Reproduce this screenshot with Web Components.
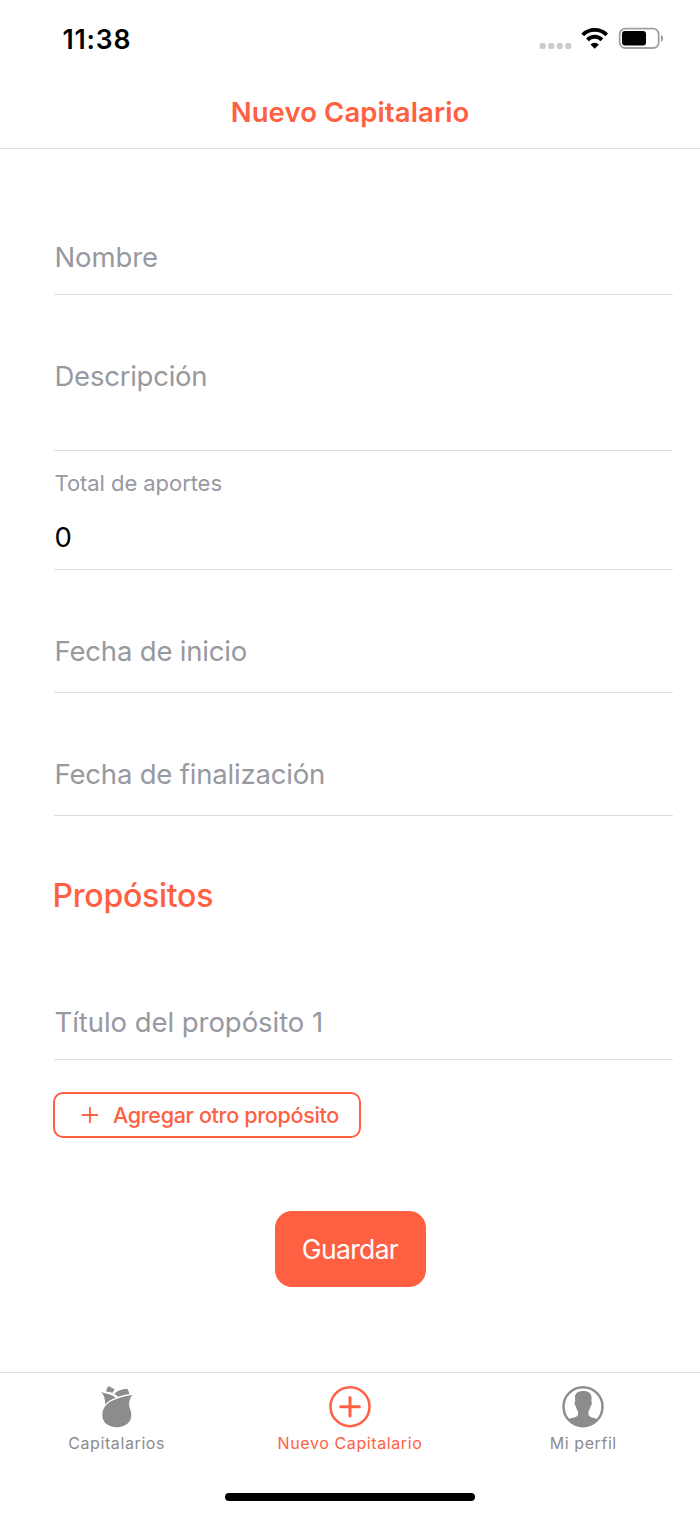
<!DOCTYPE html>
<html lang="es">
<head>
<meta charset="utf-8">
<title>Nuevo Capitalario</title>
<style>
    body {
        margin: 0;
        background: #fff;
        font-family: Inter, "Liberation Sans", sans-serif;
        --accent: #ff6042;
        --muted: #9799a1;
        --line: #dedede;
    }
</style>
</head>
<body>
<app-screen>
    <status-bar slot="top" time="11:38"></status-bar>
    <nav-header slot="top">Nuevo Capitalario</nav-header>

    <form-field style="--height: 146px; --bottom: 20px; --spacing: -0.1px">Nombre</form-field>
    <form-field style="--height: 156px; --bottom: 57px; --spacing: -0.24px">Descripción</form-field>
    <form-field style="--height: 119px; --bottom: 15px; --spacing: -0.06px" value="0">Total de aportes</form-field>
    <form-field style="--height: 123px; --bottom: 24px; --spacing: -0.18px">Fecha de inicio</form-field>
    <form-field style="--height: 123px; --bottom: 24px; --spacing: -0.19px">Fecha de finalización</form-field>
    <section-title>Propósitos</section-title>
    <form-field style="--height: 142px; --bottom: 20px; --spacing: -0.05px">Título del propósito 1</form-field>
    <add-button>Agregar otro propósito</add-button>
    <save-button>Guardar</save-button>

    <tab-bar slot="bottom">
        <tab-item icon="rose" style="--spacing: 0.6px">Capitalarios</tab-item>
        <tab-item icon="plus" active style="--spacing: 0.6px">Nuevo Capitalario</tab-item>
        <tab-item icon="person" style="--spacing: 0.56px">Mi perfil</tab-item>
    </tab-bar>
</app-screen>

<script>
const ICONS = {
    rose: `
        <svg width="42" height="42" viewBox="0 0 42 42" fill="currentColor">
            <path d="M36.2 9C33.600 12.500 32.700 16.500 33.300 20.500C33.900 23.500 35.300 25.500 35.300 29.300C35.300 36.500 29 41.200 20.800 41.200C12.400 41.200 6.300 36.500 6.300 29C6.300 21.500 11.500 16.200 19 13.500C24.500 11.400 30 10.100 36.200 9Z"/>
            <path d="M5 5.400C8.500 8 13 7.300 16.500 9.600C17.700 10.400 18.800 11.200 19.700 12.100C15.500 13.400 12 15.400 9.100 18.500C9.300 13.500 8.300 9.200 5 5.400Z"/>
            <path d="M12.600 0L18.900 3.500C17.700 4.600 17 5.600 16.500 6.800C14.400 6.100 12.300 5.900 10 5.500C10.500 3.400 11.300 1.500 12.600 0Z"/>
            <path d="M18.100 7.700C21.400 4.900 25.500 3.200 31.200 2.800C32.200 4.300 33 5.900 33.300 7.900C29.500 8.400 25.700 9.300 22 10.700C20.900 9.500 19.600 8.500 18.100 7.700Z"/>
        </svg>`,
    plus: `
        <svg width="42" height="42" viewBox="0 0 42 42" fill="none" stroke="currentColor">
            <circle cx="21" cy="20.700" r="19.500" stroke-width="2.500"/>
            <path d="M21 11.400V30M11.700 20.700H30.300" stroke-width="3" stroke-linecap="round"/>
        </svg>`,
    person: `
        <svg width="42" height="42" viewBox="0 0 42 42">
            <circle cx="21" cy="20.700" r="19.500" fill="none" stroke="currentColor" stroke-width="2.400"/>
            <path fill="currentColor" d="M13 11C13 7 16.500 5 21.300 5C26.500 5 29.700 7.500 29.600 12C29.600 13.500 29.400 14.700 29.300 15.600C30.300 16 29.900 19.500 28.600 20.100C28.200 22.500 27.300 24 26.500 25.300V29C27.500 31.500 32 31.500 36.500 33.600C32.500 38.500 27 40.800 21 40.800C15 40.800 9.500 38.500 5.500 33.600C10 31.500 15 31.500 16 29V25.300C15.100 24 14.200 22.500 13.800 20.100C12.500 19.500 12.200 16 13.200 15.600C13.100 14.300 13 12.500 13 11Z"/>
        </svg>`
};

class BaseElement extends HTMLElement {
    constructor() {
        super();
        this.attachShadow({ mode: 'open' });
    }

    connectedCallback() {
        const template = document.createElement('template');
        template.innerHTML = this.render();
        this.shadowRoot.innerHTML = '';
        this.shadowRoot.appendChild(template.content.cloneNode(true));
    }
}

class AppScreen extends BaseElement {
    render() {
        return `
            <style>
                :host {
                    display: flex;
                    flex-direction: column;
                    height: 1515px;
                    overflow: hidden;
                }
                main {
                    flex: 1;
                    display: flex;
                    flex-direction: column;
                    padding: 0 27px 0 54px;
                }
            </style>
            <slot name="top"></slot>
            <main><slot></slot></main>
            <slot name="bottom"></slot>
        `;
    }
}

class StatusBar extends BaseElement {
    render() {
        return `
            <style>
                :host {
                    display: flex;
                    justify-content: space-between;
                    align-items: center;
                    box-sizing: border-box;
                    height: 77px;
                    padding: 0 36px 0 62.500px;
                }
                .time {
                    font-size: 26.500px;
                    font-weight: 600;
                    letter-spacing: 0.8px;
                    line-height: 32px;
                }
                svg {
                    display: block;
                }
            </style>
            <span class="time">${this.getAttribute('time')}</span>
            <svg width="125" height="30" viewBox="0 0 125 30">
                <g fill="#cbcbcb">
                    <rect x="0.700" y="19" width="6" height="6" rx="1.800"/>
                    <rect x="9.200" y="19" width="6" height="6" rx="1.800"/>
                    <rect x="17.700" y="19" width="6" height="6" rx="1.800"/>
                    <rect x="26.200" y="19" width="6" height="6" rx="1.800"/>
                </g>
                <g fill="none" stroke="#000" stroke-width="3.900">
                    <path d="M43.700 10.800A17 17 0 0 1 67.700 10.800"/>
                    <path d="M48.500 15.800A10.200 10.200 0 0 1 62.900 15.800"/>
                </g>
                <path d="M55.700 24.700L51.500 20.400A6 6 0 0 1 59.900 20.400Z"/>
                <rect x="80.700" y="4.700" width="39" height="19.300" rx="5.500" fill="none" stroke="#a0a0a0" stroke-width="1.800"/>
                <rect x="83" y="7" width="24" height="14.600" rx="3"/>
                <path d="M122 11C124.700 11.800 124.700 17.100 122 17.900Z" fill="#999"/>
            </svg>
        `;
    }
}

class NavHeader extends BaseElement {
    render() {
        return `
            <style>
                :host {
                    display: flex;
                    justify-content: center;
                    align-items: center;
                    box-sizing: border-box;
                    height: 72px;
                    padding-bottom: 2px;
                    border-bottom: 1px solid var(--line);
                    color: var(--accent);
                    font-size: 27.500px;
                    font-weight: 600;
                    letter-spacing: 0.1px;
                    line-height: 34px;
                }
            </style>
            <slot></slot>
        `;
    }
}

class FormField extends BaseElement {
    render() {
        const value = this.getAttribute('value');
        return `
            <style>
                :host {
                    display: flex;
                    flex-direction: column;
                    justify-content: flex-end;
                    box-sizing: border-box;
                    height: var(--height);
                    padding: 0 0 var(--bottom) 0.500px;
                    border-bottom: 1px solid var(--line);
                    color: var(--muted);
                    font-size: 27.500px;
                    letter-spacing: var(--spacing, 0);
                    line-height: 34px;
                    white-space: nowrap;
                }
                .small {
                    font-size: 22px;
                    line-height: 28px;
                    margin-bottom: 23px;
                }
                .value {
                    color: #000;
                }
            </style>
            <div class="${value === null ? 'label' : 'small'}"><slot></slot></div>
            ${value === null ? '' : `<div class="value">${value}</div>`}
        `;
    }
}

class SectionTitle extends BaseElement {
    render() {
        return `
            <style>
                :host {
                    display: block;
                    margin: 60px 0 0 -1.500px;
                    height: 42px;
                    color: var(--accent);
                    font-size: 32px;
                    font-weight: 500;
                    letter-spacing: -0.25px;
                    line-height: 40px;
                }
            </style>
            <slot></slot>
        `;
    }
}

class AddButton extends BaseElement {
    render() {
        return `
            <style>
                :host {
                    display: flex;
                    align-items: center;
                    gap: 15px;
                    box-sizing: border-box;
                    width: 308px;
                    height: 46px;
                    margin: 32px 0 0 -1.500px;
                    padding-left: 27.500px;
                    border: 2px solid var(--accent);
                    border-radius: 10px;
                    color: var(--accent);
                    font-size: 21.500px;
                    font-weight: 500;
                    letter-spacing: -0.32px;
                    white-space: nowrap;
                }
            </style>
            <svg width="16" height="16" viewBox="0 0 16 16" fill="none" stroke="currentColor" stroke-width="1.800">
                <path d="M8 0V16M0 8H16"/>
            </svg>
            <span><slot></slot></span>
        `;
    }
}

class SaveButton extends BaseElement {
    render() {
        return `
            <style>
                :host {
                    display: flex;
                    align-items: center;
                    justify-content: center;
                    width: 151px;
                    height: 76px;
                    margin: 73px 0 0 220.500px;
                    border-radius: 17px;
                    background: var(--accent);
                    color: #fff;
                    font-size: 26.500px;
                    letter-spacing: -0.65px;
                }
            </style>
            <span><slot></slot></span>
        `;
    }
}

class TabBar extends BaseElement {
    render() {
        return `
            <style>
                :host {
                    display: flex;
                    flex-direction: column;
                    align-items: center;
                    box-sizing: border-box;
                    height: 143px;
                    border-top: 1px solid var(--line);
                }
                nav {
                    display: grid;
                    grid-template-columns: repeat(3, 1fr);
                    width: 100%;
                    height: 120px;
                }
                .home {
                    width: 250px;
                    height: 8px;
                    border-radius: 4px;
                    background: #000;
                }
            </style>
            <nav><slot></slot></nav>
            <div class="home"></div>
        `;
    }
}

class TabItem extends BaseElement {
    render() {
        return `
            <style>
                :host {
                    display: flex;
                    flex-direction: column;
                    align-items: center;
                    padding-top: 13px;
                    color: #8c8c8c;
                    font-size: 16px;
                    line-height: 20px;
                    letter-spacing: var(--spacing);
                    white-space: nowrap;
                }
                :host([active]) {
                    color: var(--accent);
                }
                svg {
                    overflow: visible;
                }
                span {
                    margin-top: 5px;
                }
            </style>
            ${ICONS[this.getAttribute('icon')]}
            <span><slot></slot></span>
        `;
    }
}

customElements.define('app-screen', AppScreen);
customElements.define('status-bar', StatusBar);
customElements.define('nav-header', NavHeader);
customElements.define('form-field', FormField);
customElements.define('section-title', SectionTitle);
customElements.define('add-button', AddButton);
customElements.define('save-button', SaveButton);
customElements.define('tab-bar', TabBar);
customElements.define('tab-item', TabItem);
</script>
</body>
</html>
